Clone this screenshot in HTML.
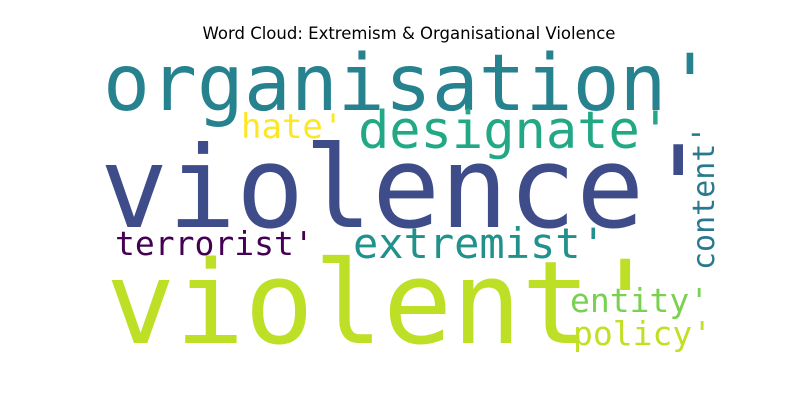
<!DOCTYPE html>
<html><head><style>html,body{margin:0;padding:0;background:#fff;width:800px;height:400px;overflow:hidden}</style></head>
<body>
<svg width="800" height="400" xmlns="http://www.w3.org/2000/svg">
<rect width="800" height="400" fill="#fff"/>
<text x="409" y="39" text-anchor="middle" font-family="DejaVu Sans, sans-serif" font-size="16.5" fill="#000">Word Cloud: Extremism &amp; Organisational Violence</text>
<g font-family="DejaVu Sans Mono, monospace">
<text x="103" y="110" font-size="78" fill="#26828e">organisation'</text>
<text x="100" y="227" font-size="113" fill="#3e4c8a">violence'</text>
<text x="106" y="343" font-size="115" fill="#bddf26">violent'</text>
<text x="358" y="148" font-size="52" fill="#22a884">designate'</text>
<text x="241" y="138" font-size="34" fill="#fde725">hate'</text>
<text x="115" y="255" font-size="33" fill="#440154">terrorist'</text>
<text x="353" y="258" font-size="42" fill="#21918c">extremist'</text>
<text x="570" y="312" font-size="33" fill="#7ad151">entity'</text>
<text x="573" y="345" font-size="33" fill="#c2df23">policy'</text>
<text transform="translate(714,270) rotate(-90)" font-size="30" fill="#2a788e">content'</text>
</g>
</svg>
</body></html>
